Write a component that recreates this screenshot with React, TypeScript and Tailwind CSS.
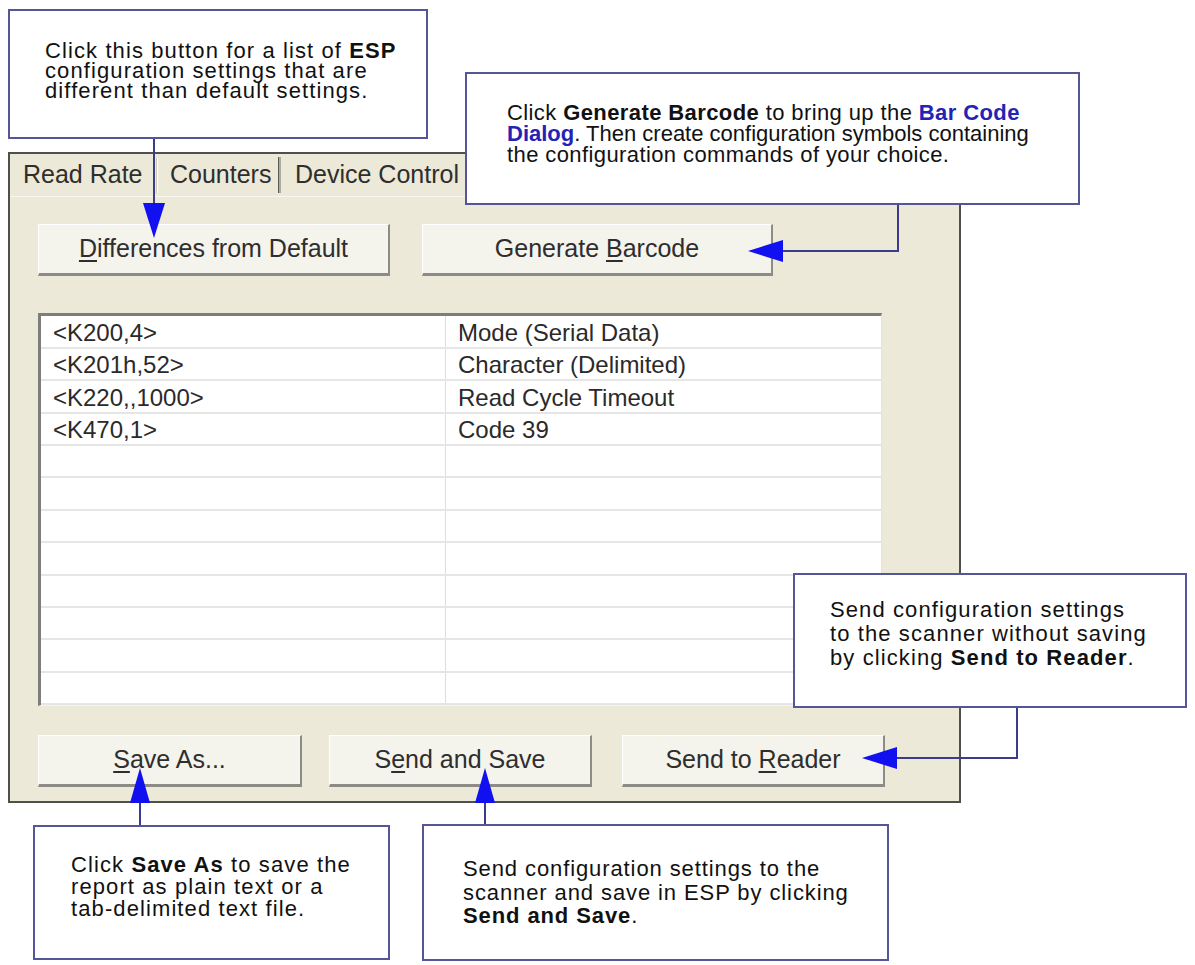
import React from "react";

type Row = [string, string];

const rows: Row[] = [
  ["<K200,4>", "Mode (Serial Data)"],
  ["<K201h,52>", "Character (Delimited)"],
  ["<K220,,1000>", "Read Cycle Timeout"],
  ["<K470,1>", "Code 39"],
  ["", ""],
  ["", ""],
  ["", ""],
  ["", ""],
  ["", ""],
  ["", ""],
  ["", ""],
  ["", ""],
];

function WinButton({
  children,
  className = "",
}: {
  children: React.ReactNode;
  className?: string;
}) {
  return (
    <div
      className={`flex h-[52px] items-center justify-center border-t border-l border-t-white border-l-white border-r-[2px] border-b-[3px] border-r-[#8c8b84] border-b-[#8c8b84] bg-[#f4f3ec] text-[25px] text-[#2e2e2e] ${className}`}
    >
      {children}
    </div>
  );
}

function Callout({
  className,
  children,
}: {
  className: string;
  children: React.ReactNode;
}) {
  return (
    <div
      className={`absolute box-border border-2 border-[#55559a] bg-white text-[22px] text-[#111] ${className}`}
    >
      {children}
    </div>
  );
}

function Connectors() {
  const line = "#3c3c8e";
  const head = "#1010f0";
  return (
    <svg
      className="pointer-events-none absolute left-0 top-0"
      width={1195}
      height={965}
      viewBox="0 0 1195 965"
    >
      {/* ESP list button */}
      <polyline points="154,139 154,206" fill="none" stroke={line} strokeWidth={2} />
      <polygon points="143,203 165,203 154,238" fill={head} />
      {/* Generate Barcode */}
      <polyline points="898,205 898,251 781,251" fill="none" stroke={line} strokeWidth={2} />
      <polygon points="783,240 783,262 748,251" fill={head} />
      {/* Send to Reader */}
      <polyline points="1017,708 1017,758 895,758" fill="none" stroke={line} strokeWidth={2} />
      <polygon points="897,747 897,769 862,758" fill={head} />
      {/* Save As */}
      <polyline points="140,800 140,825" fill="none" stroke={line} strokeWidth={2} />
      <polygon points="130,803 150,803 140,768" fill={head} />
      {/* Send and Save */}
      <polyline points="485,800 485,824" fill="none" stroke={line} strokeWidth={2} />
      <polygon points="475,803 495,803 485,768" fill={head} />
    </svg>
  );
}

export default function App() {
  return (
    <div className="relative h-[965px] w-[1195px] overflow-hidden bg-white font-['Liberation_Sans',Arial,Helvetica,sans-serif]">
      {/* Report dialog */}
      <div className="ml-[8px] mt-[152px] box-border flex h-[651px] w-[953px] flex-col border-2 border-[#4f4f4b] bg-[#ece9d8] text-[#2e2e2e]">
        {/* tab strip */}
        <div className="flex h-[43px] items-stretch border-b border-b-[#f8f7f1] text-[25px]">
          <div className="flex w-[146px] items-center pl-[13px]">Read Rate</div>
          <div className="mt-[4px] mb-[3px] flex w-[2px]">
            <div className="w-px bg-[#c9c6b6]" />
            <div className="w-px bg-white" />
          </div>
          <div className="flex w-[120px] items-center pl-[12px]">Counters</div>
          <div className="mt-[3px] mb-[3px] flex w-[3px]">
            <div className="w-px bg-[#5a5a56]" />
            <div className="w-[2px] bg-[#aeac9f]" />
          </div>
          <div className="flex flex-1 items-center pl-[14px]">Device Control</div>
        </div>

        <div className="flex flex-col pl-[28px] pt-[27px]">
          <div className="flex gap-[32px]">
            <WinButton className="w-[352px]">
              <span>
                <span className="underline underline-offset-[3px]">D</span>ifferences from Default
              </span>
            </WinButton>
            <WinButton className="w-[351px]">
              <span>
                Generate <span className="underline underline-offset-[3px]">B</span>arcode
              </span>
            </WinButton>
          </div>

          {/* settings list */}
          <div className="mt-[37px] box-border flex h-[393px] w-[844px] flex-col border-t-[3px] border-l-[3px] border-r border-b border-t-[#7d7d7a] border-l-[#7d7d7a] border-r-[#e4e3dc] border-b-[#f3f2ec] bg-white text-[24px] text-[#2a2a2a]">
            {rows.map(([code, label], i) => (
              <div
                key={i}
                className="box-border flex h-[32.5px] border-b-2 border-b-[#e6e6e6]"
              >
                <div className="flex w-[404px] items-center pl-[12px] pt-[3px]">{code}</div>
                <div className="w-px bg-[#dedede]" />
                <div className="flex flex-1 items-center pl-[12px] pt-[3px]">{label}</div>
              </div>
            ))}
          </div>

          <div className="mt-[29px] flex">
            <WinButton className="w-[264px]">
              <span>
                <span className="underline underline-offset-[3px]">S</span>ave As...
              </span>
            </WinButton>
            <WinButton className="ml-[27px] w-[263px]">
              <span>
                S<span className="underline underline-offset-[3px]">e</span>nd and Save
              </span>
            </WinButton>
            <WinButton className="ml-[30px] w-[263px]">
              <span>
                Send to <span className="underline underline-offset-[3px]">R</span>eader
              </span>
            </WinButton>
          </div>
        </div>
      </div>

      <Connectors />

      <Callout className="left-[8px] top-[9px] h-[130px] w-[420px] pl-[35px] pt-[30px] leading-[20px] tracking-[1.1px]">
        <div>
          Click this button for a list of <b>ESP</b>
        </div>
        <div>configuration settings that are</div>
        <div>different than default settings.</div>
      </Callout>

      <Callout className="left-[465px] top-[72px] h-[133px] w-[615px] pl-[40px] pt-[28px] leading-[21px] tracking-[0.4px]">
        <div>
          Click <b>Generate Barcode</b> to bring up the{" "}
          <b className="text-[#2323b5]">Bar Code</b>
        </div>
        <div className="tracking-[0px]">
          <b className="text-[#2323b5]">Dialog</b>. Then create configuration symbols containing
        </div>
        <div>the configuration commands of your choice.</div>
      </Callout>

      <Callout className="left-[793px] top-[573px] h-[135px] w-[394px] pl-[35px] pt-[23px] leading-[24px] tracking-[1.1px]">
        <div>Send configuration settings</div>
        <div>to the scanner without saving</div>
        <div>
          by clicking <b>Send to Reader</b>.
        </div>
      </Callout>

      <Callout className="left-[33px] top-[825px] h-[135px] w-[357px] pl-[36px] pt-[27px] leading-[22px] tracking-[1.1px]">
        <div>
          Click <b>Save As</b> to save the
        </div>
        <div>report as plain text or a</div>
        <div>tab-delimited text file.</div>
      </Callout>

      <Callout className="left-[422px] top-[824px] h-[137px] w-[467px] pl-[39px] pt-[31px] leading-[23.5px] tracking-[0.9px]">
        <div>Send configuration settings to the</div>
        <div>scanner and save in ESP by clicking</div>
        <div>
          <b>Send and Save</b>.
        </div>
      </Callout>
    </div>
  );
}
